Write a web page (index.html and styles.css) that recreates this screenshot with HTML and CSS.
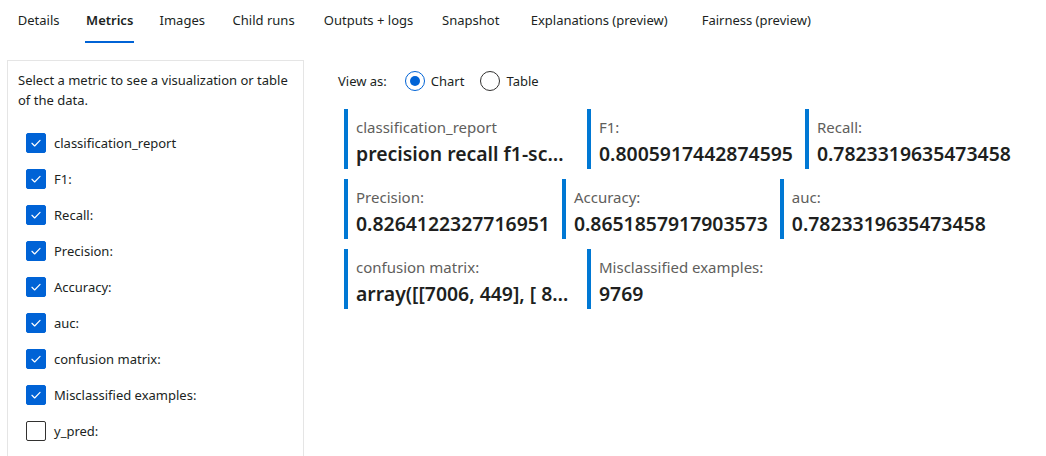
FILE: index.html
```html
<!DOCTYPE html>
<html>
<head>
<meta charset="utf-8">
<link rel="stylesheet" href="styles.css">
</head>
<body>
<nav class="tabs">
  <span class="tab" data-text="Details">Details</span>
  <span class="tab active" data-text="Metrics">Metrics</span>
  <span class="tab" data-text="Images">Images</span>
  <span class="tab" data-text="Child runs">Child runs</span>
  <span class="tab" data-text="Outputs + logs">Outputs + logs</span>
  <span class="tab" data-text="Snapshot">Snapshot</span>
  <span class="tab" data-text="Explanations (preview)">Explanations (preview)</span>
  <span class="tab" data-text="Fairness (preview)">Fairness (preview)</span>
</nav>
<div class="main">
  <aside class="panel">
    <p class="intro">Select a metric to see a visualization or table of the data.</p>
    <ul class="checks">
      <li class="check"><span class="box on"><svg viewBox="0 0 20 20"><path d="M5.5 10.3l3 3 6-6.2"/></svg></span>classification_report</li>
      <li class="check"><span class="box on"><svg viewBox="0 0 20 20"><path d="M5.5 10.3l3 3 6-6.2"/></svg></span>F1:</li>
      <li class="check"><span class="box on"><svg viewBox="0 0 20 20"><path d="M5.5 10.3l3 3 6-6.2"/></svg></span>Recall:</li>
      <li class="check"><span class="box on"><svg viewBox="0 0 20 20"><path d="M5.5 10.3l3 3 6-6.2"/></svg></span>Precision:</li>
      <li class="check"><span class="box on"><svg viewBox="0 0 20 20"><path d="M5.5 10.3l3 3 6-6.2"/></svg></span>Accuracy:</li>
      <li class="check"><span class="box on"><svg viewBox="0 0 20 20"><path d="M5.5 10.3l3 3 6-6.2"/></svg></span>auc:</li>
      <li class="check"><span class="box on"><svg viewBox="0 0 20 20"><path d="M5.5 10.3l3 3 6-6.2"/></svg></span>confusion matrix:</li>
      <li class="check"><span class="box on"><svg viewBox="0 0 20 20"><path d="M5.5 10.3l3 3 6-6.2"/></svg></span>Misclassified examples:</li>
      <li class="check"><span class="box"></span>y_pred:</li>
    </ul>
  </aside>
  <section class="content">
    <div class="viewas">
      <span class="viewas-label">View as:</span>
      <label class="radio"><span class="ring on"></span>Chart</label>
      <label class="radio"><span class="ring"></span>Table</label>
    </div>
    <div class="cards">
      <div class="card"><div class="card-label">classification_report</div><div class="card-value">precision recall f1-score support 0 0.90 0.94 0.92 7455</div></div>
      <div class="card"><div class="card-label">F1:</div><div class="card-value">0.8005917442874595</div></div>
      <div class="card"><div class="card-label">Recall:</div><div class="card-value">0.7823319635473458</div></div>
      <div class="card"><div class="card-label">Precision:</div><div class="card-value">0.8264122327716951</div></div>
      <div class="card"><div class="card-label">Accuracy:</div><div class="card-value">0.8651857917903573</div></div>
      <div class="card"><div class="card-label">auc:</div><div class="card-value">0.7823319635473458</div></div>
      <div class="card"><div class="card-label">confusion matrix:</div><div class="card-value">array([[7006, 449], [ 811, 1503]])</div></div>
      <div class="card"><div class="card-label">Misclassified examples:</div><div class="card-value">9769</div></div>
    </div>
  </section>
</div>
</body>
</html>
```
FILE: styles.css
```css
* { box-sizing: border-box; }
html, body { margin: 0; padding: 0; background: #fff; }
body {
  font-family: "Segoe UI", "Noto Sans", "Open Sans", sans-serif;
  color: #201f1e;
  width: 1046px;
  height: 456px;
  overflow: hidden;
}
.tabs {
  display: flex;
  gap: 8px;
  padding-left: 8px;
  height: 43px;
}
.tab {
  display: inline-flex;
  flex-direction: column;
  align-items: center;
  padding: 0 8px;
  font-size: 13px;
  line-height: 41px;
  height: 43px;
  position: relative;
}
.tab::after {
  content: attr(data-text);
  font-weight: 600;
  letter-spacing: 0.22px;
  height: 0;
  overflow: hidden;
  visibility: hidden;
}
.tab.active { font-weight: 600; }
.tab.active::before {
  content: "";
  position: absolute;
  left: 8px;
  right: 8px;
  bottom: 0;
  height: 2px;
  background: #0063d6;
}
.main {
  display: flex;
  padding: 17px 0 0 7px;
}
.panel {
  width: 297px;
  height: 396px;
  border: 1px solid #e5e5e5;
  border-bottom: none;
  padding: 9px 10px 0 10px;
  flex-shrink: 0;
}
.intro {
  margin: 0;
  font-size: 13px;
  line-height: 20px;
}
.checks {
  list-style: none;
  margin: 15px 0 0 0;
  padding: 0 0 0 8px;
}
.check {
  display: flex;
  align-items: center;
  height: 36px;
  font-size: 13px;
  gap: 8px;
}
.box {
  width: 20px;
  height: 20px;
  border: 1px solid #323130;
  border-radius: 2px;
  flex-shrink: 0;
  display: flex;
  align-items: center;
  justify-content: center;
}
.box.on {
  background: #0063d6;
  border-color: #0063d6;
}
.box svg { width: 20px; height: 20px; }
.box svg path {
  fill: none;
  stroke: #fff;
  stroke-width: 1.3;
  stroke-linecap: round;
  stroke-linejoin: round;
}
.content {
  flex: 1;
  padding-left: 34px;
  padding-right: 4px;
}
.viewas {
  display: flex;
  align-items: center;
  height: 28px;
  margin-top: 7px;
  font-size: 13px;
}
.viewas-label { margin-right: 18px; }
.radio {
  display: flex;
  align-items: center;
  gap: 6px;
  margin-right: 16px;
}
.ring {
  width: 20px;
  height: 20px;
  border-radius: 50%;
  border: 1px solid #323130;
  display: flex;
  align-items: center;
  justify-content: center;
}
.ring.on { border-color: #0063d6; }
.ring.on::after {
  content: "";
  width: 10px;
  height: 10px;
  border-radius: 50%;
  background: #0063d6;
}
.cards {
  display: flex;
  flex-wrap: wrap;
  row-gap: 10px;
  margin-top: 14px;
  margin-left: 6px;
}
.card {
  height: 60px;
  border-left: 4px solid #0078d4;
  padding: 8px 12px 0 8px;
  max-width: 243px;
}
.card-label {
  font-size: 15px;
  line-height: 20px;
  color: #605e5c;
  white-space: nowrap;
}
.card-value {
  font-size: 19.4px;
  line-height: 26px;
  font-weight: 600;
  margin-top: 4px;
  white-space: nowrap;
  overflow: hidden;
  text-overflow: ellipsis;
}
```
